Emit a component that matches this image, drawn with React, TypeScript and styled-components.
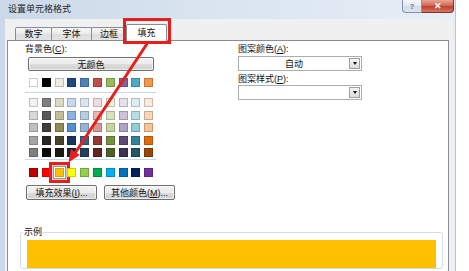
import styled, { createGlobalStyle } from 'styled-components'

const GlobalStyle = createGlobalStyle`
  html, body { margin: 0; padding: 0; background: #fff; }
  body {
    font-family: "Liberation Sans", "Noto Sans CJK SC", sans-serif;
    font-size: 9px;
    color: #111;
  }
  * { box-sizing: border-box; }
`

const Canvas = styled.div`
  position: relative;
  width: 469px;
  height: 271px;
  overflow: hidden;
  background: #fff;
`

const Window = styled.div`
  width: 456px;
  height: 290px;
  display: flex;
  flex-direction: column;
  background: linear-gradient(90deg, #cbd8e8 0%, #d9e4f0 45%, #e7eef6 100%);
  border-right: 1px solid #b0c8e2;
`

const TitleBar = styled.div`
  height: 19px;
  display: flex;
  align-items: flex-start;
  padding-left: 8px;
`

const Title = styled.span`
  flex: 1;
  line-height: 19px;
  font-size: 9px;
  color: #1e1e1e;
`

const Caption = styled.div`
  display: flex;
  margin-right: 1px;
`

const CaptionButton = styled.div<{ $close?: boolean }>`
  width: ${p => (p.$close ? 32 : 20)}px;
  height: 13px;
  display: flex;
  align-items: center;
  justify-content: center;
  font-size: ${p => (p.$close ? 9 : 8)}px;
  font-weight: bold;
  border: 1px solid ${p => (p.$close ? '#7e3429' : '#8193ab')};
  border-top: none;
  border-left: ${p => (p.$close ? 'none' : undefined)};
  border-radius: ${p => (p.$close ? '0 0 4px 0' : '0 0 0 4px')};
  color: ${p => (p.$close ? '#fff' : '#6c7c91')};
  background: ${p =>
    p.$close
      ? 'linear-gradient(#e7a596 0%, #d0695a 45%, #bf4031 55%, #d47a62 100%)'
      : 'linear-gradient(#f4f7fb 0%, #e3eaf3 50%, #d3dde9 51%, #dbe4ef 100%)'};
`

const Client = styled.div`
  flex: 1;
  margin: 0 2px 0 5px;
  padding: 0 4px 0 2px;
  background: #f0f0f0;
  display: flex;
  flex-direction: column;
`

const TabRow = styled.div`
  height: 21px;
  display: flex;
  align-items: flex-end;
  padding-left: 8px;
`

const Tab = styled.div<{ $w: number; $active?: boolean; $marked?: boolean }>`
  position: relative;
  z-index: ${p => (p.$active ? 2 : 1)};
  width: ${p => p.$w}px;
  height: ${p => (p.$active ? 17 : 13)}px;
  margin-left: -1px;
  margin-bottom: ${p => (p.$active ? -1 : 0)}px;
  padding-top: ${p => (p.$active ? 2 : 0)}px;
  line-height: 13px;
  text-align: center;
  font-size: 9px;
  border: 1px solid #898c95;
  border-bottom: none;
  border-radius: 2px 2px 0 0;
  background: ${p =>
    p.$active ? '#fff' : 'linear-gradient(#f6f6f6 0%, #ebebeb 50%, #dddddd 51%, #e4e4e4 100%)'};

  &:first-child {
    margin-left: 0;
  }

  &::after {
    content: '';
    display: ${p => (p.$marked ? 'block' : 'none')};
    position: absolute;
    top: -7px;
    left: -4px;
    right: -5px;
    bottom: -3px;
    border: 3px solid #e41f1c;
  }
`

const Panel = styled.div`
  flex: 1;
  background: #fff;
  border: 1px solid #898c95;
  padding: 2px 5px 0 12px;
`

const TopSection = styled.div`
  display: flex;
  padding-left: 5px;
`

const LeftColumn = styled.div`
  width: 213px;
  display: flex;
  flex-direction: column;
  align-items: flex-start;
`

const RightColumn = styled.div`
  width: 124px;
  display: flex;
  flex-direction: column;
`

const Label = styled.div<{ $mt?: number }>`
  line-height: 12px;
  height: 12px;
  font-size: 9px;
  margin-top: ${p => p.$mt ?? 0}px;
  white-space: nowrap;
`

const Button = styled.div<{ $w: number; $ml?: number; $mt?: number }>`
  width: ${p => p.$w}px;
  height: ${p => (p.$mt !== undefined ? 15 : 14)}px;
  margin-left: ${p => p.$ml ?? 0}px;
  margin-top: ${p => p.$mt ?? 2}px;
  display: flex;
  align-items: center;
  justify-content: center;
  font-size: 9px;
  white-space: nowrap;
  border: 1px solid #707070;
  border-radius: 2px;
  background: linear-gradient(#f3f3f3 0%, #ebebeb 50%, #dddddd 51%, #cfcfcf 100%);
  box-shadow: inset 0 0 0 1px rgba(255, 255, 255, 0.6);
`

const SwatchGrid = styled.div<{ $mt: number }>`
  display: grid;
  grid-template-columns: repeat(10, 9px);
  grid-auto-rows: 9px;
  column-gap: 3.8px;
  row-gap: 3.5px;
  margin-left: 4px;
  margin-top: ${p => p.$mt}px;
`

const Swatch = styled.div<{ $color: string; $selected?: boolean; $marked?: boolean }>`
  position: relative;
  background: ${p => p.$color};
  box-shadow: ${p =>
    p.$selected
      ? 'inset 0 0 0 1px rgba(0,0,0,0.15), 0 0 0 1px #fff, 0 0 0 2.5px #9a9a9a'
      : 'inset 0 0 0 1px rgba(0,0,0,0.2)'};

  &::after {
    content: '';
    display: ${p => (p.$marked ? 'block' : 'none')};
    position: absolute;
    inset: -6px;
    border: 3px solid #e41f1c;
  }
`

const Separator = styled.div<{ $mt: number }>`
  width: 131px;
  height: 1px;
  margin-top: ${p => p.$mt}px;
  background: #c6d8ee;
`

const ButtonRow = styled.div`
  display: flex;
  gap: 7px;
  margin-top: 8px;
  margin-left: 1px;
`

const Select = styled.div<{ $mt?: number }>`
  height: 15px;
  margin-top: ${p => p.$mt ?? 0}px;
  display: flex;
  align-items: center;
  border: 1px solid #abadb3;
  background: #fff;
`

const SelectValue = styled.span`
  flex: 1;
  text-align: center;
  font-size: 9px;
`

const DropButton = styled.div`
  width: 11px;
  height: 11px;
  margin-right: 1px;
  display: flex;
  align-items: center;
  justify-content: center;
  border: 1px solid #9aa0a8;
  background: linear-gradient(#f5f5f5, #dcdcdc);

  &::before {
    content: '';
    border-left: 2.5px solid transparent;
    border-right: 2.5px solid transparent;
    border-top: 3px solid #111;
  }
`

const Group = styled.fieldset`
  margin: 26px 0 0 0;
  padding: 0 6px 0 2px;
  border: 1px solid #d4dee6;
  border-radius: 3px;
  min-inline-size: 0;
`

const Legend = styled.legend`
  padding: 0 1px;
  line-height: 12px;
  font-size: 9px;
`

const Sample = styled.div`
  height: 28px;
  margin: 2px 0 0 4px;
  background: #ffc000;
`

const Arrow = styled.svg`
  position: absolute;
  top: 0;
  left: 0;
  pointer-events: none;
  z-index: 5;
`

const themeRow = ['#ffffff', '#000000', '#eeece1', '#1f497d', '#4f81bd', '#c0504d', '#9bbb59', '#8064a2', '#4bacc6', '#f79646']

const tintRows = [
  ['#f2f2f2', '#7f7f7f', '#ddd9c3', '#c6d9f0', '#dbe5f1', '#f2dcdb', '#ebf1dd', '#e5e0ec', '#dbeef3', '#fdeada'],
  ['#d8d8d8', '#595959', '#c4bd97', '#8db3e2', '#b8cce4', '#e5b9b7', '#d7e3bc', '#ccc1d9', '#b7dde8', '#fbd5b5'],
  ['#bfbfbf', '#3f3f3f', '#938953', '#548dd4', '#95b3d7', '#d99694', '#c3d69b', '#b2a2c7', '#92cddc', '#fac08f'],
  ['#a5a5a5', '#262626', '#494429', '#17365d', '#366092', '#953734', '#76923c', '#5f497a', '#31859b', '#e36c09'],
  ['#7f7f7f', '#0c0c0c', '#1d1b10', '#0f243e', '#244061', '#632423', '#4f6128', '#3f3151', '#205867', '#974806'],
]

const standardRow = ['#c00000', '#ff0000', '#ffc000', '#ffff00', '#92d050', '#00b050', '#00b0f0', '#0070c0', '#002060', '#7030a0']

const tabs = [
  { name: '数字', w: 37 },
  { name: '字体', w: 41 },
  { name: '边框', w: 36 },
  { name: '填充', w: 41, active: true },
]

export default function App() {
  return (
    <Canvas>
      <GlobalStyle />
      <Window>
        <TitleBar>
          <Title>设置单元格格式</Title>
          <Caption>
            <CaptionButton>?</CaptionButton>
            <CaptionButton $close>✕</CaptionButton>
          </Caption>
        </TitleBar>
        <Client>
          <TabRow>
            {tabs.map(t => (
              <Tab key={t.name} $w={t.w} $active={t.active} $marked={t.active}>
                {t.name}
              </Tab>
            ))}
          </TabRow>
          <Panel>
            <TopSection>
              <LeftColumn>
                <Label>背景色(<u>C</u>):</Label>
                <Button $w={126} $ml={3}>无颜色</Button>
                <SwatchGrid $mt={7}>
                  {themeRow.map(c => <Swatch key={c} $color={c} />)}
                </SwatchGrid>
                <Separator $mt={5} />
                <SwatchGrid $mt={5}>
                  {tintRows.flat().map((c, i) => <Swatch key={i} $color={c} />)}
                </SwatchGrid>
                <Separator $mt={2} />
                <SwatchGrid $mt={8}>
                  {standardRow.map(c => (
                    <Swatch key={c} $color={c} $selected={c === '#ffc000'} $marked={c === '#ffc000'} />
                  ))}
                </SwatchGrid>
                <ButtonRow>
                  <Button $w={71} $mt={0}>填充效果(<u>I</u>)...</Button>
                  <Button $w={71} $mt={0}>其他颜色(<u>M</u>)...</Button>
                </ButtonRow>
              </LeftColumn>
              <RightColumn>
                <Label>图案颜色(<u>A</u>):</Label>
                <Select $mt={1}>
                  <SelectValue>自动</SelectValue>
                  <DropButton />
                </Select>
                <Label $mt={2}>图案样式(<u>P</u>):</Label>
                <Select>
                  <SelectValue />
                  <DropButton />
                </Select>
              </RightColumn>
            </TopSection>
            <Group>
              <Legend>示例</Legend>
              <Sample />
            </Group>
          </Panel>
        </Client>
      </Window>
      <Arrow width="469" height="271" viewBox="0 0 469 271">
        <line x1="147.5" y1="43" x2="75.5" y2="152.5" stroke="#e41f1c" strokeWidth="3" />
        <polygon points="68.5,162.5 79.8,155 70.8,149" fill="#e41f1c" />
      </Arrow>
    </Canvas>
  )
}
